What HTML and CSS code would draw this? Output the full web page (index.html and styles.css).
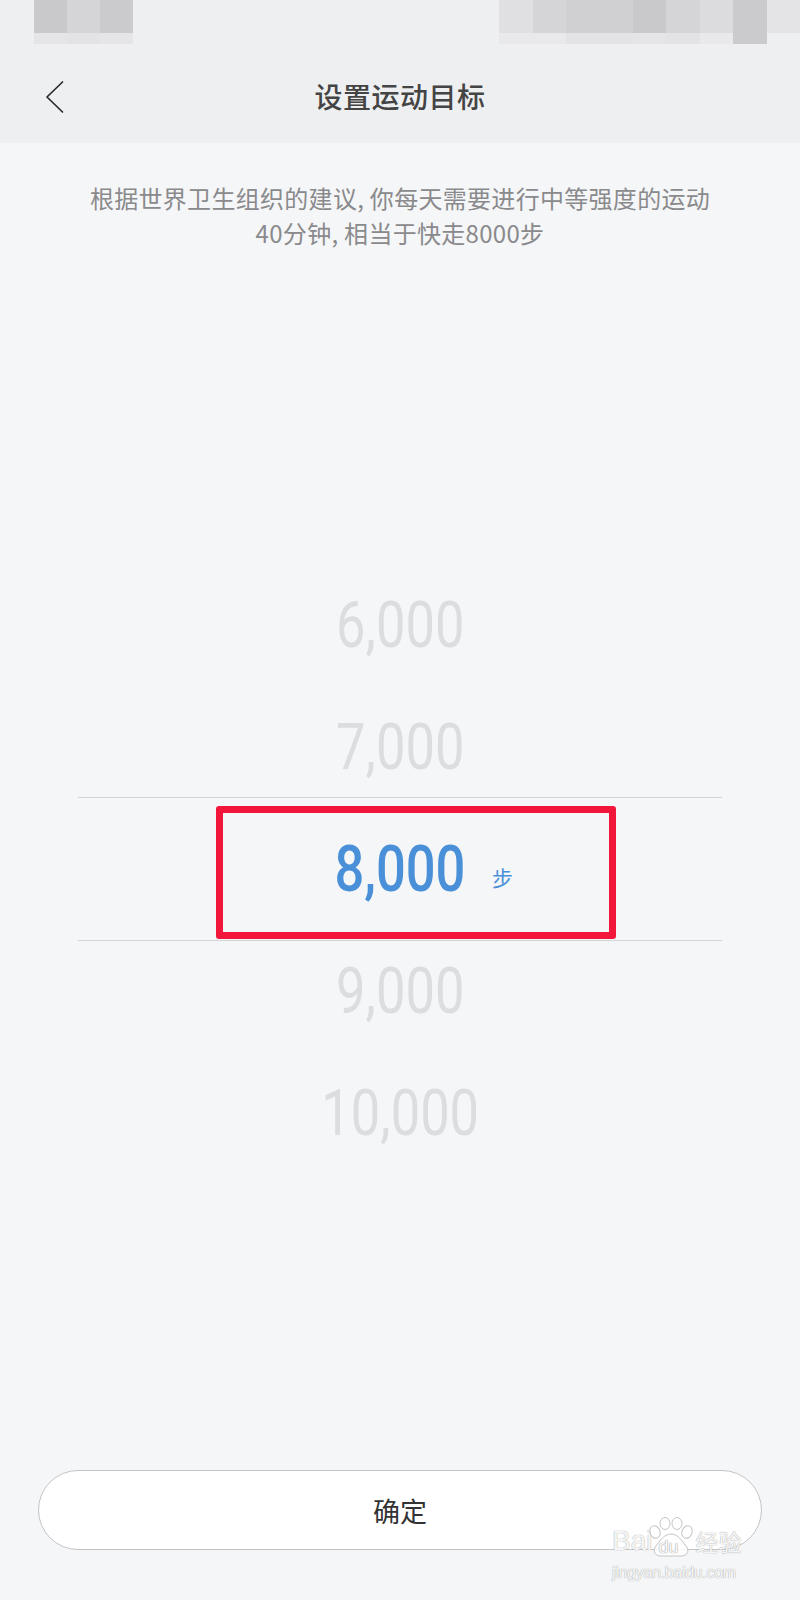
FILE: index.html
```html
<!DOCTYPE html>
<html lang="zh-CN">
<head>
<meta charset="utf-8">
<title>设置运动目标</title>
<link rel="stylesheet" href="styles.css">
</head>
<body>
<div class="page">
  <header class="header">
    <div class="status">
      <div class="mosaic mosaic-left">
        <i class="m1"></i><i class="m3"></i><i class="m2"></i>
        <i class="l1"></i><i class="l2"></i><i class="l1"></i>
      </div>
      <div class="mosaic mosaic-right">
        <i class="m5"></i><i class="m3"></i><i class="m4"></i><i class="m4"></i><i class="m1"></i><i class="m3"></i><i class="m6"></i><i class="m2"></i><i class="m7"></i>
        <i class="l3"></i><i class="l3"></i><i class="l2"></i><i class="l2"></i><i class="l1"></i><i class="l2"></i><i class="l3"></i><i class="m2"></i><i class="l4"></i>
      </div>
    </div>
    <nav class="nav">
      <svg class="back" width="22" height="34" viewBox="0 0 22 34" aria-hidden="true">
        <polyline points="18.5,2 3,17 18.5,32" fill="none" stroke="#2a2a2a" stroke-width="1.7" stroke-linecap="round" stroke-linejoin="round"/>
      </svg>
      <h1 class="title">设置运动目标</h1>
    </nav>
  </header>

  <p class="desc">根据世界卫生组织的建议, 你每天需要进行中等强度的运动<br>40分钟, 相当于快走8000步</p>

  <section class="picker">
    <div class="row"><span class="num">6,000</span></div>
    <div class="row"><span class="num">7,000</span></div>
    <div class="row selected"><span class="num">8,000</span><span class="unit">步</span></div>
    <div class="row"><span class="num">9,000</span></div>
    <div class="row"><span class="num">10,000</span></div>
    <div class="band"></div>
    <div class="mark"></div>
  </section>

  <button class="confirm">确定</button>

  <div class="watermark">
    <div class="wm-top">
      <span class="wm-en">Bai</span>
      <span class="wm-paw">
        <svg width="46" height="40" viewBox="0 0 46 40" aria-hidden="true">
          <g fill="#ffffff" fill-opacity="0.85" stroke="#c4c4c4" stroke-width="1">
            <ellipse cx="7" cy="15" rx="5" ry="6.5" transform="rotate(-20 7 15)"/>
            <ellipse cx="17" cy="6.5" rx="5" ry="6"/>
            <ellipse cx="29" cy="6.5" rx="5" ry="6"/>
            <ellipse cx="39" cy="15" rx="5" ry="6.5" transform="rotate(20 39 15)"/>
            <path d="M23 17 C16 17 12 24 8 29 C4 34 7 39 13 39 L33 39 C39 39 42 34 38 29 C34 24 30 17 23 17 Z"/>
          </g>
        </svg>
        <span class="wm-du">du</span>
      </span>
      <span class="wm-cn">经验</span>
    </div>
    <div class="wm-url">jingyan.baidu.com</div>
  </div>
</div>
</body>
</html>
```

FILE: styles.css
```css
* { box-sizing: border-box; }
html, body { margin: 0; padding: 0; }
body {
  width: 800px;
  height: 1600px;
  background: #f5f6f8;
  font-family: "Noto Sans CJK SC", "Noto Sans", sans-serif;
}
.page {
  position: relative;
  width: 800px;
  height: 1600px;
  display: flex;
  flex-direction: column;
  overflow: hidden;
}
.header {
  background: #eeeff1;
  height: 143px;
  display: flex;
  flex-direction: column;
}
.status {
  height: 44px;
  display: flex;
  justify-content: space-between;
}
.mosaic {
  display: grid;
  grid-template-rows: 33px 11px;
}
.mosaic i { display: block; }
.mosaic-left {
  margin-left: 34px;
  grid-template-columns: repeat(3, 33px);
}
.mosaic-right {
  grid-template-columns: repeat(9, 33.4px);
}
.m1 { background: #c9c9cb; }
.m2 { background: #cbcbcd; }
.m3 { background: #d5d5d7; }
.m4 { background: #d0d0d2; }
.m5 { background: #e0e0e2; }
.m6 { background: #dcdcde; }
.m7 { background: #e4e4e6; }
.l1 { background: #e5e5e7; }
.l2 { background: #e3e3e5; }
.l3 { background: #e9e9eb; }
.l4 { background: #eeeff1; }
.nav {
  height: 99px;
  padding-top: 4px;
  display: flex;
  align-items: center;
  justify-content: center;
  position: relative;
}
.back {
  position: absolute;
  left: 44px;
  top: 36px;
}
.title {
  margin: 0;
  font-size: 28px;
  font-weight: 500;
  color: #444444;
  letter-spacing: 0.5px;
}
.desc {
  margin: 37px 0 0;
  text-align: center;
  font-size: 24px;
  line-height: 35px;
  color: #8a8a8c;
  letter-spacing: 0.3px;
}
.picker {
  position: relative;
  margin-top: 315px;
  display: flex;
  flex-direction: column;
}
.row {
  height: 122px;
  display: grid;
  grid-template-columns: 1fr auto 1fr;
  align-items: center;
}
.num {
  grid-column: 2;
  font-family: Roboto, "Liberation Sans", sans-serif;
  font-size: 64px;
  line-height: 122px;
  color: #dcdddf;
  display: inline-block;
  transform: scaleX(0.82);
}
.selected .num {
  color: #4a90d8;
  font-weight: 500;
}
.unit {
  grid-column: 3;
  justify-self: start;
  margin-left: 12px;
  margin-top: 14px;
  font-size: 21px;
  color: #4a90d8;
}
.band {
  position: absolute;
  left: 78px;
  right: 78px;
  top: 232px;
  height: 144px;
  border-top: 1px solid #d3d4d6;
  border-bottom: 1px solid #d3d4d6;
}
.mark {
  position: absolute;
  left: 216px;
  width: 400px;
  top: 241px;
  height: 133px;
  border: 7px solid #f2163a;
  border-radius: 3px;
}
.confirm {
  margin: 295px 38px 0;
  height: 80px;
  border: 1px solid #c4c4c6;
  border-radius: 40px;
  background: #ffffff;
  font-family: "Noto Sans CJK SC", sans-serif;
  font-size: 27px;
  color: #333333;
  padding: 0;
}
.watermark {
  position: absolute;
  left: 612px;
  top: 1513px;
  width: 150px;
  pointer-events: none;
}
.wm-top {
  display: flex;
  align-items: flex-end;
  height: 44px;
}
.wm-en, .wm-du, .wm-cn, .wm-url {
  color: rgba(255,255,255,0.9);
  text-shadow: 0 0 1px #b0b0b0, 0 0 1px #b0b0b0;
}
.wm-en {
  font-family: "Liberation Sans", sans-serif;
  font-size: 28px;
  line-height: 28px;
  margin-bottom: 2px;
}
.wm-paw {
  position: relative;
  width: 46px;
  height: 40px;
  margin-left: -4px;
}
.wm-paw svg { display: block; }
.wm-du {
  position: absolute;
  left: 10px;
  bottom: 0;
  font-family: "Liberation Sans", sans-serif;
  font-size: 18px;
  line-height: 20px;
  color: rgba(255,255,255,0.95);
  text-shadow: 0 0 1px #a0a0a0, 0 0 1px #a0a0a0;
}
.wm-cn {
  font-size: 23px;
  line-height: 28px;
  margin-left: 1px;
  margin-bottom: 2px;
}
.wm-url {
  font-family: "Liberation Sans", sans-serif;
  font-size: 16px;
  line-height: 18px;
  margin-top: 7px;
  letter-spacing: -0.3px;
}
```
